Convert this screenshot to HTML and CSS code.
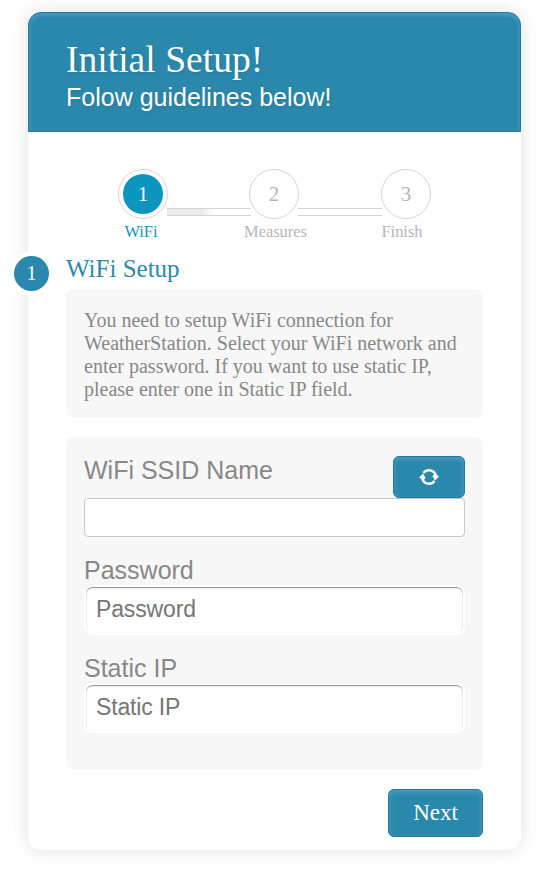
FILE: index.html
```html
<!DOCTYPE html>
<html lang="en">
<head>
<meta charset="utf-8">
<title>Initial Setup</title>
<link rel="stylesheet" href="styles.css">
</head>
<body>
<form class="card">
  <header class="header">
    <h1 class="title"><span>Initial Setup!</span></h1>
    <p class="subtitle"><span>Folow guidelines below!</span></p>
  </header>
  <nav class="progress">
    <div class="step active"><span class="circle"><span class="num">1</span></span><span class="label">WiFi</span></div>
    <span class="bar half"></span>
    <div class="step measures"><span class="circle"><span class="num">2</span></span><span class="label">Measures</span></div>
    <span class="bar"></span>
    <div class="step finish"><span class="circle"><span class="num">3</span></span><span class="label">Finish</span></div>
  </nav>
  <main class="content">
    <h2 class="section"><span class="badge">1</span><span>WiFi Setup</span></h2>
    <p class="info">You need to setup WiFi connection for WeatherStation. Select your WiFi network and enter password. If you want to use static IP, please enter one in Static IP field.</p>
    <div class="fields">
      <div class="row">
        <label for="ssid">WiFi SSID Name</label>
        <button type="button" class="button refresh" aria-label="Refresh">
          <svg width="20" height="18" viewBox="0 0 20 18"><g fill="none" stroke="#fff" stroke-width="2.5"><path d="M4.5 4.9A7 7 0 0 1 16.8 7.5"/><path d="M15.5 13.1A7 7 0 0 1 3.2 10.5"/></g><path fill="#fff" d="M0 9.6 4.1 5.6 6.5 10 4.4 12.2ZM20 8.4 15.9 12.4 13.5 8 15.6 5.8Z"/></svg>
        </button>
      </div>
      <input id="ssid" class="select" type="text">
      <label for="password">Password</label>
      <input id="password" class="input" type="password" placeholder="Password">
      <label for="ip">Static IP</label>
      <input id="ip" class="input" type="text" placeholder="Static IP">
    </div>
    <div class="actions"><button type="button" class="button next"><span>Next</span></button></div>
  </main>
</form>
</body>
</html>
```
FILE: styles.css
```css
* { box-sizing: border-box; }
body { margin: 0; padding: 12px 30px 35px 28px; background: #fff; font-family: "Liberation Serif", serif; }
h1, h2, p { margin: 0; font-weight: 400; }
.card { height: 838px; border-radius: 13px; background: #fff; box-shadow: 0 0 18px rgba(0,0,0,.13); }
.header { height: 120px; padding: 24px 37px; color: #fff; background: #2a88ad; border: 1px solid #20799f; border-radius: 13px 13px 0 0; box-shadow: inset 0 2px 4px rgba(255,255,255,.2); text-shadow: 1px 1px 3px rgba(0,0,0,.12); }
.title { font-size: 37.6px; line-height: 45px; }
.subtitle { font: 25px/30px "Liberation Sans", sans-serif; }
.progress { display: flex; height: 112px; padding: 37px 0 0 90px; }
.step { flex: none; display: flex; flex-direction: column; align-items: center; width: 50px; color: #b5b5ba; }
.circle { display: flex; width: 50px; height: 50px; padding: 4px; border: 1px solid #d5d5da; border-radius: 50%; }
.num { flex: 1; display: flex; align-items: center; justify-content: center; border-radius: 50%; font-size: 21px; }
.label { margin: 3px 0 0 -4px; font-size: 16.4px; line-height: 20px; white-space: nowrap; }
.active .num { color: #fff; background: #0c95be; }
.active .label { color: #0c95be; }
.measures .label { margin-left: 3px; }
.finish .label { margin-left: -8px; }
.bar { flex: none; width: 84px; height: 8px; margin: 39px -2px 0 -1px; border: solid #d5d5da; border-width: 1px 0; background: #fff; }
.half { background: linear-gradient(to right, #ebebeb 40%, #fff 58%); }
.measures + .bar { margin-right: -1px; }
.content { padding: 0 38px; }
.section { display: flex; gap: 17px; height: 45px; margin-left: -52px; color: #2a88ad; font-size: 25px; line-height: 49px; }
.section > span:last-child { line-height: 50px; }
.badge { width: 35px; height: 35px; margin-top: 12px; border-radius: 50%; background: #2a88ad; color: #fff; box-shadow: 0 0 0 5px #fff; font-size: 20px; line-height: 35px; text-align: center; }
.info { height: 129px; padding: 20px 18px 18px; border-radius: 8px; background: #f7f7f7; color: #888; font-size: 20px; line-height: 23px; }
.fields { height: 333px; margin-top: 19px; padding: 19px 18px; border-radius: 8px; background: #f7f7f7; color: #888; font: 25px/30px "Liberation Sans", sans-serif; }
.row { display: flex; justify-content: space-between; height: 42px; }
.row label { line-height: 28px; }
label { display: block; }
.button { border: 1px solid #20799f; border-radius: 6px; color: #fff; background: #2a88ad; box-shadow: inset 0 2px 5px rgba(255,255,255,.2); }
.refresh { display: flex; align-items: center; justify-content: center; width: 72px; height: 42px; padding: 0; }
.select { display: block; width: 100%; height: 39px; margin-bottom: 18px; border: 1px solid #c8c8c8; border-radius: 4px; background: #fff; }
.input { display: block; width: 100%; height: 50px; margin: 0 0 18px; padding: 0 10px 2px; border: 2px solid #fff; border-radius: 8px; background: #fff; box-shadow: inset 0 1px 1px rgba(0,0,0,.35), inset 0 1px 2px rgba(0,0,0,.15); color: #777; font: 23px "Liberation Sans", sans-serif; }
.input::placeholder { color: #757575; opacity: 1; letter-spacing: -.15px; }
.actions { display: flex; justify-content: flex-end; padding-top: 19px; }
.next { width: 95px; height: 48px; padding: 0; font: 23px "Liberation Serif", serif; }
```
